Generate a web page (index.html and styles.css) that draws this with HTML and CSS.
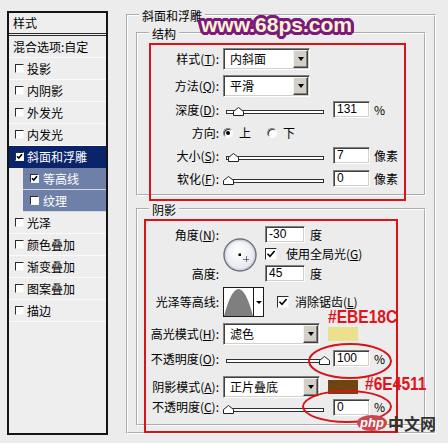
FILE: index.html
```html
<!DOCTYPE html>
<html lang="zh-CN">
<head>
<meta charset="utf-8">
<title>图层样式 - 斜面和浮雕</title>
<link rel="stylesheet" href="styles.css">
</head>
<body>
<div class="dialog">
  <div class="list">
    <div class="list-head">样式</div>
    <div class="item plain">混合选项:自定</div>
    <div class="item"><span class="cb"></span>投影</div>
    <div class="item"><span class="cb"></span>内阴影</div>
    <div class="item"><span class="cb"></span>外发光</div>
    <div class="item"><span class="cb"></span>内发光</div>
    <div class="item sel"><span class="cb"><svg class="tick" viewBox="0 0 7 7"><path d="M1 3.2 2.8 5 6 1.3"/></svg></span>斜面和浮雕</div>
    <div class="item sub"><span class="cb"><svg class="tick" viewBox="0 0 7 7"><path d="M1 3.2 2.8 5 6 1.3"/></svg></span>等高线</div>
    <div class="item sub"><span class="cb"></span>纹理</div>
    <div class="item"><span class="cb"></span>光泽</div>
    <div class="item"><span class="cb"></span>颜色叠加</div>
    <div class="item"><span class="cb"></span>渐变叠加</div>
    <div class="item"><span class="cb"></span>图案叠加</div>
    <div class="item"><span class="cb"></span>描边</div>
  </div>

  <fieldset class="group outer">
    <legend>斜面和浮雕</legend>

    <fieldset class="group inner struct">
      <legend>结构</legend>
      <div class="row h22">
        <span class="lbl">样式(<u>T</u>):</span>
        <div class="select"><span class="val">内斜面</span><span class="arrow"></span></div>
      </div>
      <div class="row h22 mt5">
        <span class="lbl">方法(<u>Q</u>):</span>
        <div class="select"><span class="val">平滑</span><span class="arrow"></span></div>
      </div>
      <div class="row h23 mt1">
        <span class="lbl">深度(<u>D</u>):</span>
        <div class="slider"><div class="track"></div><svg class="thumb" style="left:10px" viewBox="0 0 11 9"><path d="M.5 8.5V4.5L5.5.5l5 4v4z"/></svg></div>
        <div class="num">131</div><span class="unit">%</span>
      </div>
      <div class="row h23">
        <span class="lbl">方向:</span>
        <span class="radio on"></span><span class="rtext">上</span>
        <span class="radio r2"></span><span class="rtext">下</span>
      </div>
      <div class="row h23">
        <span class="lbl">大小(<u>S</u>):</span>
        <div class="slider"><div class="track"></div><svg class="thumb" style="left:5px" viewBox="0 0 11 9"><path d="M.5 8.5V4.5L5.5.5l5 4v4z"/></svg></div>
        <div class="num">7</div><span class="unit">像素</span>
      </div>
      <div class="row h23">
        <span class="lbl">软化(<u>F</u>):</span>
        <div class="slider"><div class="track"></div><svg class="thumb" style="left:0px" viewBox="0 0 11 9"><path d="M.5 8.5V4.5L5.5.5l5 4v4z"/></svg></div>
        <div class="num">0</div><span class="unit">像素</span>
      </div>
    </fieldset>

    <fieldset class="group inner shadow">
      <legend>阴影</legend>
      <div class="angle-grid">
        <span class="lbl g1">角度(<u>N</u>):</span>
        <div class="dial">
          <svg viewBox="0 0 34 34" width="34" height="34">
            <defs>
              <radialGradient id="dg" cx="45%" cy="40%" r="60%">
                <stop offset="0" stop-color="#ffffff"/>
                <stop offset="1" stop-color="#e4e6ec"/>
              </radialGradient>
            </defs>
            <circle cx="17" cy="17" r="16" fill="url(#dg)" stroke="#6c7282" stroke-width="1.4"/>
            <circle cx="17" cy="17" r="14.6" fill="none" stroke="#c9ccd6" stroke-width="1"/>
            <rect x="15.5" y="15.5" width="2.5" height="2.5" fill="#000"/>
            <path d="M23.5 18.5v6M20.5 21.5h6" stroke="#000" stroke-width="1" stroke-dasharray="1 1"/>
          </svg>
        </div>
        <div class="ctl g1"><div class="num w40">-30</div><span class="unit2">度</span></div>
        <div class="ctl g2"><span class="cb big"><svg class="tick" viewBox="0 0 10 10"><path d="M1.5 4.8 4 7.3 8.6 2"/></svg></span><span class="cbt">使用全局光(<u>G</u>)</span></div>
        <span class="lbl g3">高度:</span>
        <div class="ctl g3"><div class="num w40">45</div><span class="unit2">度</span></div>
      </div>
      <div class="row h30 mt4">
        <span class="lbl">光泽等高线:</span>
        <div class="contour">
          <svg viewBox="0 0 29 28"><path d="M0 28 Q14.5 -26 29 28Z" fill="#7f7f7f"/></svg>
          <span class="carrow"></span>
        </div>
        <span class="cb big c2"><svg class="tick" viewBox="0 0 10 10"><path d="M1.5 4.8 4 7.3 8.6 2"/></svg></span><span class="cbt2">消除锯齿(<u>L</u>)</span>
      </div>
      <div class="row h22 mt6">
        <span class="lbl">高光模式(<u>H</u>):</span>
        <div class="select wide"><span class="val">滤色</span><span class="arrow"></span></div>
        <span class="swatch hi"></span>
      </div>
      <div class="row h23 mt2">
        <span class="lbl">不透明度(<u>O</u>):</span>
        <div class="slider"><div class="track"></div><svg class="thumb" style="left:96px" viewBox="0 0 11 9"><path d="M.5 8.5V4.5L5.5.5l5 4v4z"/></svg></div>
        <div class="num">100</div><span class="unit">%</span>
      </div>
      <div class="row h22 mt6">
        <span class="lbl">阴影模式(<u>A</u>):</span>
        <div class="select wide"><span class="val">正片叠底</span><span class="arrow"></span></div>
        <span class="swatch sh"></span>
      </div>
      <div class="row h18">
        <span class="lbl">不透明度(<u>C</u>):</span>
        <div class="slider"><div class="track"></div><svg class="thumb" style="left:0px" viewBox="0 0 11 9"><path d="M.5 8.5V4.5L5.5.5l5 4v4z"/></svg></div>
        <div class="num">0</div><span class="unit">%</span>
      </div>
    </fieldset>
  </fieldset>
</div>

<div class="wm">www.68ps.com</div>
<div class="redbox rb1"></div>
<div class="redbox rb2"></div>
<div class="ring ring1"></div>
<div class="ring ring2"></div>
<div class="note n1">#EBE18C</div>
<div class="note n2">#6E4511</div>
<div class="php"><span class="php-oval">php</span><span class="php-cn">中文网</span></div>
</body>
</html>
```

FILE: styles.css
```css
* { box-sizing: border-box; }
html, body { margin: 0; padding: 0; }
body {
  width: 448px;
  height: 443px;
  overflow: hidden;
  position: relative;
  background: #ececec;
  font-family: "Noto Sans CJK SC", "Noto Sans", sans-serif;
  font-size: 12px;
  line-height: 14px;
  color: #000;
}
u { text-underline-offset: 1px; }

.dialog { display: flex; align-items: flex-start; padding: 8px 0 0 7px; }

/* style list */
.list {
  flex: none;
  margin-top: 3px;
  width: 101px;
  height: 424px;
  border: 2px solid #141414;
  background: #eeeeee;
}
.list-head {
  height: 23px;
  line-height: 20px;
  padding-left: 4px;
  border-bottom: 3px double #2a2a2a;
}
.item {
  height: 22px;
  display: flex;
  align-items: center;
  padding-left: 6px;
  white-space: nowrap;
  border-bottom: 1px solid #fbfbfb;
}
.item.plain { padding-left: 4px; }
.item.sel { background: #0a246a; color: #fff; border-bottom-color: #0a246a; }
.item.sub {
  margin-left: 14px;
  padding-left: 7px;
  background: #6f80a8;
  color: #fff;
  border-bottom-color: #d2d7e3;
}
.item.sub .cb { margin-right: 4px; }

.cb {
  flex: none;
  width: 9px;
  height: 9px;
  margin-right: 3px;
  border: 1px solid;
  border-color: #2b2b2b #f4f4f4 #f4f4f4 #2b2b2b;
  background: #fff;
  display: flex;
  align-items: center;
  justify-content: center;
}
.cb svg { width: 7px; height: 7px; display: block; }
.tick { fill: none; stroke: #000; stroke-width: 1.6; }
.cb.big { width: 12px; height: 12px; margin-right: 0; }
.cb.big svg { width: 10px; height: 10px; }

/* group boxes */
.group { margin: 0; min-width: 0; padding: 0; border: 2px groove #fff; }
.group > legend { padding: 2px 3px 0; line-height: 12px; font-size: 12px; }
.outer { flex: none; margin-left: 18px; width: 310px; height: 426px; padding: 4px 8px 0; }
.outer > legend { margin-left: 3px; }
.inner { width: 290px; }
.inner > legend { margin-left: 11px; }
.struct { height: 170px; padding-top: 8px; }
.shadow { height: 224px; margin-top: 6px; padding-top: 10px; }

/* rows */
.row { display: flex; align-items: center; white-space: nowrap; }
.h18 { height: 18px; }
.h22 { height: 22px; }
.h23 { height: 23px; }
.h30 { height: 30px; }
.mt1 { margin-top: 1px; }
.mt2 { margin-top: 2px; }
.mt4 { margin-top: 4px; }
.mt5 { margin-top: 5px; }
.mt6 { margin-top: 6px; }
.lbl { flex: none; width: 81px; margin-right: 4px; text-align: right; white-space: nowrap; }

.select {
  flex: none;
  display: flex;
  width: 87px;
  height: 22px;
  padding: 1px;
  border: 1px solid;
  border-color: #808080 #fff #fff #808080;
  box-shadow: inset 1px 1px 0 #404040, inset -1px -1px 0 #d4d0c8;
  background: #fff;
}
.select.wide { width: 97px; }
.select .val { flex: 1; padding-left: 5px; line-height: 18px; }
.arrow {
  flex: none;
  width: 15px;
  height: 18px;
  background: #d4d0c8;
  border: 1px solid;
  border-color: #f4f4f4 #404040 #404040 #f4f4f4;
  box-shadow: inset -1px -1px 0 #808080;
  display: flex;
  align-items: center;
  justify-content: center;
}
.arrow::after {
  content: "";
  border-left: 3.5px solid transparent;
  border-right: 3.5px solid transparent;
  border-top: 4px solid #000;
}

.num {
  flex: none;
  width: 37px;
  height: 17px;
  margin-left: 6px;
  padding-left: 3px;
  border: 1px solid;
  border-color: #808080 #fff #fff #808080;
  box-shadow: inset 1px 1px 0 #404040, inset -1px -1px 0 #d4d0c8;
  background: #fff;
  font-family: "Liberation Sans", Arial, sans-serif;
  font-size: 12px;
  line-height: 15px;
}
.num.w40 { width: 40px; margin-left: 0; }
.unit { margin-left: 4px; }
.unit2 { margin-left: 5px; }

.slider {
  position: relative;
  flex: none;
  width: 104px;
  height: 9px;
  padding: 3px 3px 0;
  margin-top: 4px;
}
.track { height: 4px; border: 1px solid #303030; background: #fff; }
.thumb { position: absolute; top: 0; width: 11px; height: 9px; }
.thumb path { fill: #fff; stroke: #222; stroke-width: 1; }

.radio {
  flex: none;
  width: 10px;
  height: 10px;
  border-radius: 50%;
  border: 1px solid;
  border-color: #808080 #fff #fff #808080;
  box-shadow: inset 1px 1px 0 #404040;
  background: #fff;
  display: flex;
  align-items: center;
  justify-content: center;
}
.radio.on::after { content: ""; width: 4px; height: 4px; border-radius: 50%; background: #000; }
.radio.r2 { margin-left: 16px; }
.rtext { margin-left: 6px; }

/* angle block */
.angle-grid {
  display: grid;
  grid-template-columns: 81px 46px auto;
  grid-template-rows: 17px 21px 19px;
  align-items: center;
}
.angle-grid .lbl { margin-right: 0; }
.g1 { grid-row: 1; }
.g2 { grid-row: 2; grid-column: 3; }
.g3 { grid-row: 3; }
.angle-grid .lbl.g1, .angle-grid .lbl.g3 { grid-column: 1; }
.ctl.g1, .ctl.g3 { grid-column: 3; }
.ctl { display: flex; align-items: center; }
.dial { grid-column: 2; grid-row: 1 / 4; margin-left: 4px; width: 34px; height: 34px; }
.dial svg { display: block; }
.cbt { margin-left: 9px; }

.contour {
  flex: none;
  display: flex;
  width: 41px;
  height: 30px;
  border: 1px solid #1a1a1a;
  background: #fff;
}
.contour svg { width: 29px; height: 28px; display: block; }
.carrow {
  flex: 1;
  border-left: 1px solid #1a1a1a;
  display: flex;
  align-items: center;
  justify-content: center;
}
.carrow::after {
  content: "";
  border-left: 3px solid transparent;
  border-right: 3px solid transparent;
  border-top: 3px solid #000;
}
.cb.c2 { margin-left: 13px; }
.cbt2 { margin-left: 6px; }

.swatch { flex: none; width: 30px; height: 14px; margin-left: 8px; }
.swatch.hi { background: #ebe18c; }
.swatch.sh { background: #6e4511; }

/* overlays */
.wm {
  position: absolute;
  left: 201px;
  top: 14px;
  font-family: "Liberation Sans", Arial, sans-serif;
  font-weight: bold;
  font-size: 21px;
  line-height: 21px;
  color: #fbf3d2;
  text-shadow:
    2px 0 0 #7b1a7b, -2px 0 0 #7b1a7b, 0 2px 0 #7b1a7b, 0 -2px 0 #7b1a7b,
    2px 2px 0 #7b1a7b, -2px -2px 0 #7b1a7b, 2px -2px 0 #7b1a7b, -2px 2px 0 #7b1a7b,
    3px 0 0 #7b1a7b, -3px 0 0 #7b1a7b, 0 3px 0 #7b1a7b, 0 -3px 0 #7b1a7b,
    1px 3px 0 #7b1a7b, -1px 3px 0 #7b1a7b, 1px -3px 0 #7b1a7b, -1px -3px 0 #7b1a7b,
    3px 1px 0 #7b1a7b, 3px -1px 0 #7b1a7b, -3px 1px 0 #7b1a7b, -3px -1px 0 #7b1a7b;
}
.redbox { position: absolute; border: 2px solid #d7141a; }
.rb1 { left: 149px; top: 43px; width: 257px; height: 158px; }
.rb2 { left: 144px; top: 219px; width: 254px; height: 214px; }
.ring { position: absolute; border: 2px solid #d7141a; border-radius: 50%; }
.ring1 { left: 308px; top: 343px; width: 84px; height: 36px; }
.ring2 { left: 302px; top: 390px; width: 90px; height: 33px; }
.note {
  position: absolute;
  font-family: "Liberation Sans", Arial, sans-serif;
  font-weight: bold;
  font-size: 19px;
  line-height: 14px;
  color: #e0141c;
  transform: scaleX(0.82);
  transform-origin: 0 0;
  white-space: nowrap;
}
.n1 { left: 328px; top: 310px; }
.n2 { left: 365px; top: 377px; }
.php { position: absolute; left: 357px; top: 415px; height: 16px; display: flex; align-items: center; }
.php-oval {
  width: 30px;
  height: 16px;
  border-radius: 50%;
  background: #c9474f;
  color: #fff;
  font-family: "Liberation Sans", Arial, sans-serif;
  font-style: italic;
  font-weight: bold;
  font-size: 13px;
  line-height: 16px;
  text-align: center;
}
.php-cn { margin-left: 1px; font-size: 16px; line-height: 16px; font-weight: bold; color: #333; }
```
